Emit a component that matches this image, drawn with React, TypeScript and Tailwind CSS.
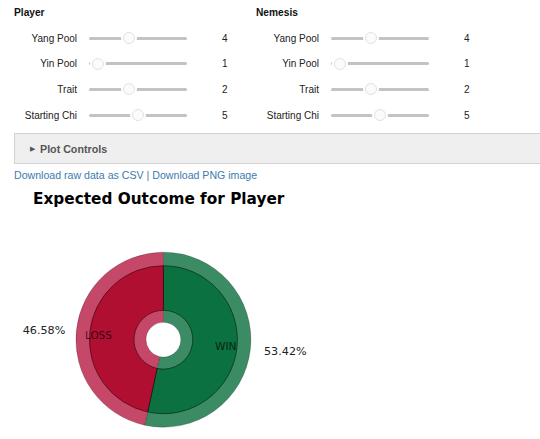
import React from 'react';

type Slider = { label: string; value: number; max: number };

const sliders: Slider[] = [
  { label: 'Yang Pool', value: 4, max: 10 },
  { label: 'Yin Pool', value: 1, max: 30 },
  { label: 'Trait', value: 2, max: 5 },
  { label: 'Starting Chi', value: 5, max: 10 },
];

const SliderRow = ({ s }: { s: Slider }) => {
  // thumb centre inside a 98px track, 6px inset at each end
  const left = 6 + 86 * (s.value / s.max) - 6;
  return (
    <div className="flex items-center h-[25.6px] text-[10px] text-[#222]">
      <div className="w-[63px] text-right whitespace-nowrap">{s.label}</div>
      <div className="relative w-[98px] h-[14px] ml-[12px] flex items-center">
        <div className="w-full h-[3px] rounded-full bg-[#c3c3c3]"></div>
        <div
          className="absolute top-[1px] w-[12px] h-[12px] rounded-full bg-[#fbfbfb] border border-[#e2e2e2] ring-2 ring-white"
          style={{ left }}
        ></div>
      </div>
      <div className="ml-[35px]">{s.value}</div>
    </div>
  );
};

const Column = ({ title }: { title: string }) => (
  <div className="w-[242px] shrink-0">
    <div className="h-[25.5px] flex items-center text-[10.2px] font-bold text-[#111]">{title}</div>
    {sliders.map((s) => (
      <SliderRow key={s.label} s={s} />
    ))}
  </div>
);

const CX = 163.4;
const CY = 127.7;

const pt = (r: number, deg: number) => {
  const a = (deg * Math.PI) / 180;
  return `${(CX + r * Math.sin(a)).toFixed(2)} ${(CY - r * Math.cos(a)).toFixed(2)}`;
};

const wedge = (ri: number, ro: number, a0: number, a1: number) => {
  const large = a1 - a0 > 180 ? 1 : 0;
  return `M ${pt(ro, a0)} A ${ro} ${ro} 0 ${large} 1 ${pt(ro, a1)} L ${pt(ri, a1)} A ${ri} ${ri} 0 ${large} 0 ${pt(ri, a0)} Z`;
};

const OutcomeChart = () => {
  const split = 360 * 0.5342;
  return (
    <svg width="540" height="227" viewBox="0 0 540 227" className="block">
      <path d={wedge(17.4, 87.5, 0, split)} fill="#3b8c64" stroke="rgba(0,0,0,0.35)" strokeWidth="0.6" />
      <path d={wedge(17.4, 87.5, split, 360)} fill="#c64869" stroke="rgba(0,0,0,0.35)" strokeWidth="0.6" />
      <path d={wedge(29.4, 74, 0, split)} fill="#0c7141" stroke="rgba(0,0,0,0.6)" strokeWidth="0.8" />
      <path d={wedge(29.4, 74, split, 360)} fill="#b10f31" stroke="rgba(0,0,0,0.6)" strokeWidth="0.8" />
      <g fontFamily="'DejaVu Sans', sans-serif">
        <text x="22.7" y="121.7" fontSize="11.2" fill="#222">46.58%</text>
        <text x="264" y="142.7" fontSize="11.2" fill="#222">53.42%</text>
        <text x="85" y="126.5" fontSize="10.4" fill="rgba(0,0,0,0.72)">LOSS</text>
        <text x="215" y="138.2" fontSize="10.6" fill="rgba(0,0,0,0.72)">WIN</text>
      </g>
    </svg>
  );
};

export default function App() {
  return (
    <div className="w-[540px] h-[439px] overflow-hidden bg-white font-['Liberation_Sans',Arial,sans-serif]">
      <div className="flex pl-[14px]">
        <Column title="Player" />
        <Column title="Nemesis" />
      </div>

      <div className="ml-[14px] mt-[5.4px] h-[31px] w-[540px] flex items-center gap-[5px] pl-[15px] bg-[#efefef] border border-[#d2d2d2]">
        <span className="text-[7px] text-[#555]">▶</span>
        <span className="text-[10.7px] font-bold text-[#555]">Plot Controls</span>
      </div>

      <div className="h-[23px] flex items-center pl-[14px] text-[10.6px] text-[#3b7bb0]">
        <a>Download raw data as CSV</a>
        <span className="mx-[3px]">|</span>
        <a>Download PNG image</a>
      </div>

      <div className="h-[25px] flex items-center pl-[33px] font-['DejaVu_Sans',sans-serif] font-bold text-[15.3px] text-black">
        Expected Outcome for Player
      </div>

      <OutcomeChart />
    </div>
  );
}
